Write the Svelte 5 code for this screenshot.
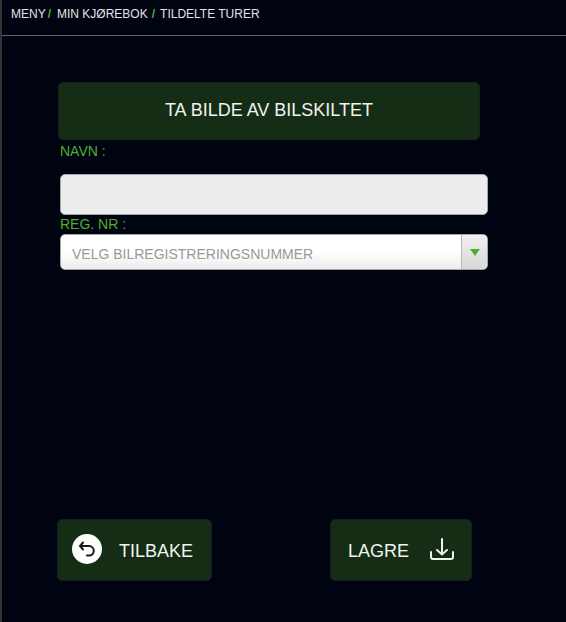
<script lang="ts">
	let name = $state('');
	let registration = $state('');

	const trail = [
		{ label: 'MENY', href: '#meny' },
		{ label: 'MIN KJØREBOK', href: '#kjorebok' },
		{ label: 'TILDELTE TURER', href: '#turer' }
	];
</script>

<div class="page">
	<nav class="breadcrumbs" aria-label="Brødsmulesti">
		{#each trail as { label, href }, i}
			{#if i > 0}<span class="separator" class:wide={i > 1}>/</span>{/if}
			<a {href}>{label}</a>
		{/each}
	</nav>

	<main>
		<button type="button" class="photo">TA BILDE AV BILSKILTET</button>

		<div class="fields">
			<label class="name-label" for="name">NAVN :</label>
			<input id="name" type="text" bind:value={name} />

			<label for="registration">REG. NR :</label>
			<div class="select-wrapper">
				<select id="registration" bind:value={registration}>
					<option value="">VELG BILREGISTRERINGSNUMMER</option>
				</select>
				<span class="arrow" aria-hidden="true">
					<svg width="10" height="7" viewBox="0 0 10 7"><path d="M0 0h10L5 7z" fill="#4fae2b" /></svg>
				</span>
			</div>
		</div>
	</main>

	<footer>
		<button type="button" class="back">
			<svg width="30" height="30" viewBox="0 0 30 30" aria-hidden="true">
				<circle cx="15" cy="15" r="15" fill="#fff" />
				<path
					d="M11 8.5L8 12l3 3.5M8.5 12H17a4.8 4.8 0 0 1 0 9.600h-2"
					fill="none"
					stroke="#151a1a"
					stroke-width="2"
					stroke-linecap="round"
				/>
			</svg>
			<span>TILBAKE</span>
		</button>
		<button type="button" class="save">
			<span>LAGRE</span>
			<svg width="24" height="22" viewBox="0 0 24 22" aria-hidden="true">
				<path
					d="M12 1v15M7 12l5 4.500 5-4.500M1 14v5q0 2 2 2h18q2 0 2-2v-5"
					fill="none"
					stroke="#f0f3ef"
					stroke-width="2"
					stroke-linecap="round"
				/>
			</svg>
		</button>
	</footer>
</div>

<style>
	:global(body) {
		margin: 0;
		background: #000411;
	}

	.page {
		display: flex;
		flex-direction: column;
		box-sizing: border-box;
		min-height: 100vh;
		border-left: 2px solid #343434;
		background: #000411;
		font-family: 'Liberation Sans', Arial, sans-serif;
	}

	.breadcrumbs {
		display: flex;
		padding: 6px 9px 13px;
		border-bottom: 1px solid #63656b;
		font-size: 12px;
		line-height: 16px;
	}

	.breadcrumbs a {
		color: #e2e3e6;
		text-decoration: none;
	}

	.separator {
		margin: 0 6px 0 2px;
		color: #4fae2b;
		font-weight: bold;
	}

	.separator.wide {
		margin: 0 5px 0 4px;
	}

	main {
		display: flex;
		flex: 1;
		flex-direction: column;
		padding: 46px 78px 24px 56px;
	}

	button {
		border: 1px solid #152420;
		border-radius: 5px;
		background: #152d15;
		color: #f0f3ef;
		font-family: inherit;
		font-size: 18px;
		line-height: 20px;
		cursor: pointer;
	}

	.photo {
		margin-right: 8px;
		padding: 17px 16px 19px;
	}

	.fields {
		display: flex;
		flex-direction: column;
		margin-left: 2px;
	}

	label {
		color: #4fae2b;
		font-size: 14px;
		line-height: 19px;
	}

	.name-label {
		padding: 2px 0 13px;
	}

	input,
	select {
		box-sizing: border-box;
		width: 100%;
		border: 1px solid #a5a6aa;
		border-radius: 5px;
		font-family: inherit;
		font-size: 14px;
	}

	input {
		height: 41px;
		padding: 0 11px;
		background: #ededed;
		color: #333;
	}

	.select-wrapper {
		position: relative;
	}

	select {
		display: block;
		height: 36px;
		padding: 3px 36px 0 11px;
		appearance: none;
		background: linear-gradient(#fff 50%, #ececec);
		color: #999;
	}

	/* sits over the right end of the select, clicks go through */
	.arrow {
		position: absolute;
		top: 1px;
		right: 1px;
		bottom: 1px;
		display: flex;
		align-items: center;
		justify-content: center;
		width: 25px;
		border-left: 1px solid #b8b8b8;
		border-radius: 0 4px 4px 0;
		background: linear-gradient(#f0f0f0, #d8d8d8);
		pointer-events: none;
	}

	footer {
		display: flex;
		justify-content: space-between;
		padding: 0 94px 41px 55px;
	}

	footer button {
		display: flex;
		align-items: center;
		height: 62px;
		border-color: #151b2b;
	}

	footer span {
		padding-top: 4px;
	}

	.back {
		gap: 17px;
		padding: 0 18px 2px 14px;
	}

	.save {
		gap: 21px;
		padding: 0 17px 2px;
	}
</style>
